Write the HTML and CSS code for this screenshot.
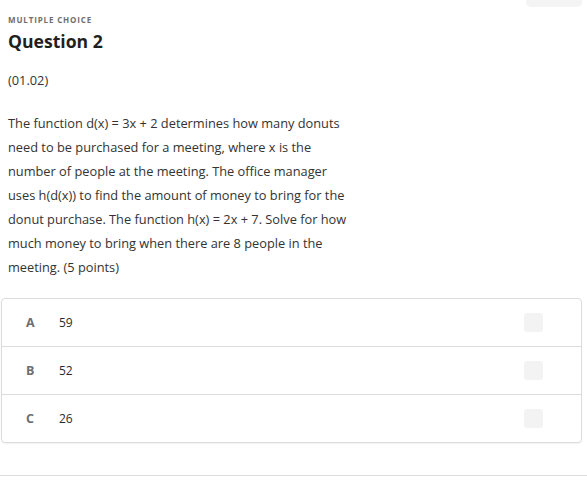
FILE: index.html
```html
<!DOCTYPE html>
<html lang="en">
<head>
<meta charset="utf-8">
<title>Question 2</title>
<link rel="stylesheet" href="styles.css">
</head>
<body>
<div class="page">
  <div class="topbar"><div class="tab"></div></div>
  <div class="question">
    <div class="kind">MULTIPLE CHOICE</div>
    <h1 class="title">Question 2</h1>
    <p class="code">(01.02)</p>
    <p class="prompt">The function d(x) = 3x + 2 determines how many donuts need to be purchased for a meeting, where x is the number of people at the meeting. The office manager uses h(d(x)) to find the amount of money to bring for the donut purchase. The function h(x) = 2x + 7. Solve for how much money to bring when there are 8 people in the meeting. (5 points)</p>
  </div>
  <div class="choices">
    <div class="choice"><span class="letter">A</span><span class="value">59</span><span class="box"></span></div>
    <div class="choice"><span class="letter">B</span><span class="value">52</span><span class="box"></span></div>
    <div class="choice"><span class="letter">C</span><span class="value">26</span><span class="box"></span></div>
  </div>
  <div class="rule"></div>
</div>
</body>
</html>
```
FILE: styles.css
```css
html, body {
  margin: 0;
  padding: 0;
  background: #ffffff;
}
body {
  font-family: "Open Sans", "DejaVu Sans", sans-serif;
  color: #2b2b2b;
}
.page {
  display: flex;
  flex-direction: column;
}
.topbar {
  display: flex;
  justify-content: flex-end;
  height: 7px;
  padding-right: 5px;
}
.tab {
  width: 56px;
  height: 7px;
  background: #f4f4f4;
  border-radius: 0 0 5px 5px;
}
.question {
  padding: 7px 0 0 8px;
  display: flex;
  flex-direction: column;
}
.kind {
  font-size: 8px;
  line-height: 12px;
  font-weight: 700;
  letter-spacing: 0.85px;
  color: #6f6f6f;
}
.title {
  margin: 3px 0 0;
  font-size: 17.6px;
  line-height: 24px;
  font-weight: 700;
  color: #1f1f1f;
}
.code {
  margin: 15px 0 0;
  font-size: 12.8px;
  line-height: 24px;
  color: #333;
}
.prompt {
  margin: 19px 0 0;
  width: 345px;
  font-size: 12.8px;
  line-height: 24px;
  color: #333;
}
.choices {
  margin: 19px 5px 0 1px;
  border: 1px solid #dcdcdc;
  border-radius: 4px;
  box-shadow: 0 1px 2px rgba(0,0,0,0.06);
  display: flex;
  flex-direction: column;
}
.choice {
  height: 47px;
  display: flex;
  align-items: center;
  border-top: 1px solid #dcdcdc;
  font-size: 12px;
}
.choice:first-child {
  border-top: none;
}
.letter {
  width: 24px;
  margin-left: 24px;
  font-size: 12.5px;
  font-weight: 700;
  color: #6e6e6e;
}
.value {
  flex: 1;
  margin-left: 9px;
  color: #2b2b2b;
}
.box {
  width: 19px;
  height: 19px;
  margin-right: 38px;
  background: #f3f3f3;
  border-radius: 3px;
}
.rule {
  margin-top: 32px;
  height: 1px;
  background: #dcdcdc;
}
```
